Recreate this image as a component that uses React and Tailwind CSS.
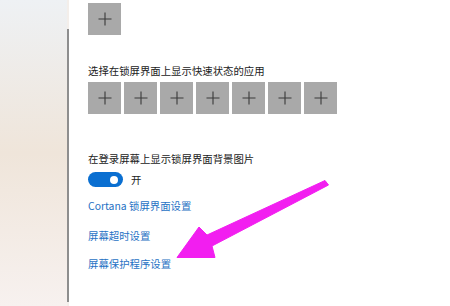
import React from "react";

const font = { fontFamily: '"Noto Sans CJK SC", "Noto Sans", sans-serif' };

function Tile() {
    return (
        <div className="w-[33px] h-[32px] bg-[#a9a9a9] flex items-center justify-center">
            <svg width="14" height="14" viewBox="0 0 14 14">
                <path d="M7 0.5V13.5M0.5 7H13.5" stroke="#3a3a3a" strokeWidth="1.1" />
            </svg>
        </div>
    );
}

export default function App() {
    return (
        <div className="relative w-[450px] h-[306px] flex bg-white overflow-hidden text-[10.4px] text-[#222]" style={font}>
            <div className="w-[67px] h-full bg-gradient-to-b from-[#eef1f4] via-[#efe5da] to-[#f7f1ef]" />
            <div className="w-[2px] h-full bg-[#f3eeea]">
                <div className="mt-[29px] h-[273px] w-[2px] bg-[#8e8e8e]" />
            </div>
            <div className="flex flex-col pl-[19px] pt-[3px]">
                <Tile />
                <div className="mt-[28px] leading-[15px]">选择在锁屏界面上显示快速状态的应用</div>
                <div className="mt-[4px] flex gap-[3px]">
                    {[0, 1, 2, 3, 4, 5, 6].map((i) => (
                        <Tile key={i} />
                    ))}
                </div>
                <div className="mt-[37px] leading-[15px]">在登录屏幕上显示锁屏界面背景图片</div>
                <div className="mt-[6px] flex items-center gap-[8px]">
                    <div className="w-[35px] h-[15px] rounded-full bg-[#0a6fd1] flex items-center justify-end pr-[5px]">
                        <div className="w-[8px] h-[8px] rounded-full bg-white" />
                    </div>
                    <span className="leading-[15px]">开</span>
                </div>
                <div className="mt-[11px] leading-[15px] text-[#1f72c4]">Cortana 锁屏界面设置</div>
                <div className="mt-[15px] leading-[15px] text-[#1f72c4]">屏幕超时设置</div>
                <div className="mt-[13px] leading-[15px] text-[#1f72c4]">屏幕保护程序设置</div>
            </div>
            <svg className="absolute left-0 top-0" width="450" height="306" viewBox="0 0 450 306">
                <polygon
                    points="325,180.5 207,235 199,227 177,257.5 215,257.5 212,246 328.5,185"
                    fill="#f21ef0"
                    stroke="#f21ef0"
                    strokeWidth="1"
                    strokeLinejoin="round"
                />
            </svg>
        </div>
    );
}
